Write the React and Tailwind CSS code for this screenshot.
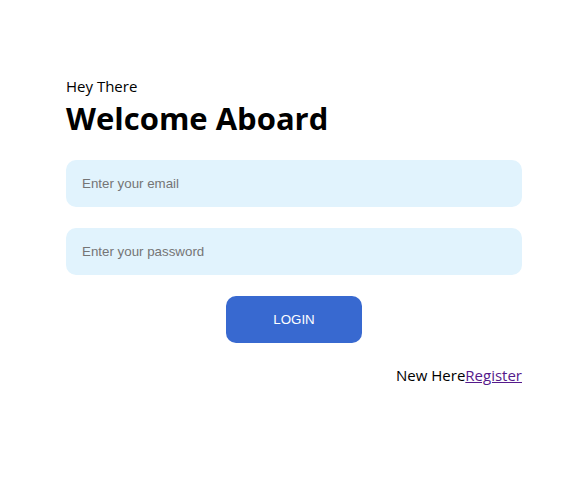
export default function App() {
  return (
    <div className="w-[581px] h-[503px] bg-white flex pl-[66px] font-['Open_Sans',_'Noto_Sans',_sans-serif]">
      <div className="w-[456px] mt-[76px] flex flex-col">
        <p className="text-[15px] leading-[20px] text-black">Hey There</p>
        <h1 className="text-[31px] leading-[40px] font-bold text-black mt-[2px]">Welcome Aboard</h1>
        <input
          type="email"
          placeholder="Enter your email"
          className="mt-[22px] h-[47px] w-full rounded-[10px] bg-[#e1f3fd] px-4 text-[13.333px] font-['Liberation_Sans',_Arial,_sans-serif] outline-none placeholder:text-[#757575]"
        />
        <input
          type="password"
          placeholder="Enter your password"
          className="mt-[21px] h-[47px] w-full rounded-[10px] bg-[#e1f3fd] px-4 text-[13.333px] font-['Liberation_Sans',_Arial,_sans-serif] outline-none placeholder:text-[#757575]"
        />
        <div className="flex justify-center mt-[21px]">
          <button className="w-[136px] h-[47px] rounded-[10px] bg-[#3869d0] text-white text-[13.333px] font-['Liberation_Sans',_Arial,_sans-serif]">
            LOGIN
          </button>
        </div>
        <div className="flex justify-end mt-[22px] text-[15px] leading-[20px] text-black">
          <span>New Here</span>
          <a href="#" className="underline text-[#551a8b]">Register</a>
        </div>
      </div>
    </div>
  );
}
